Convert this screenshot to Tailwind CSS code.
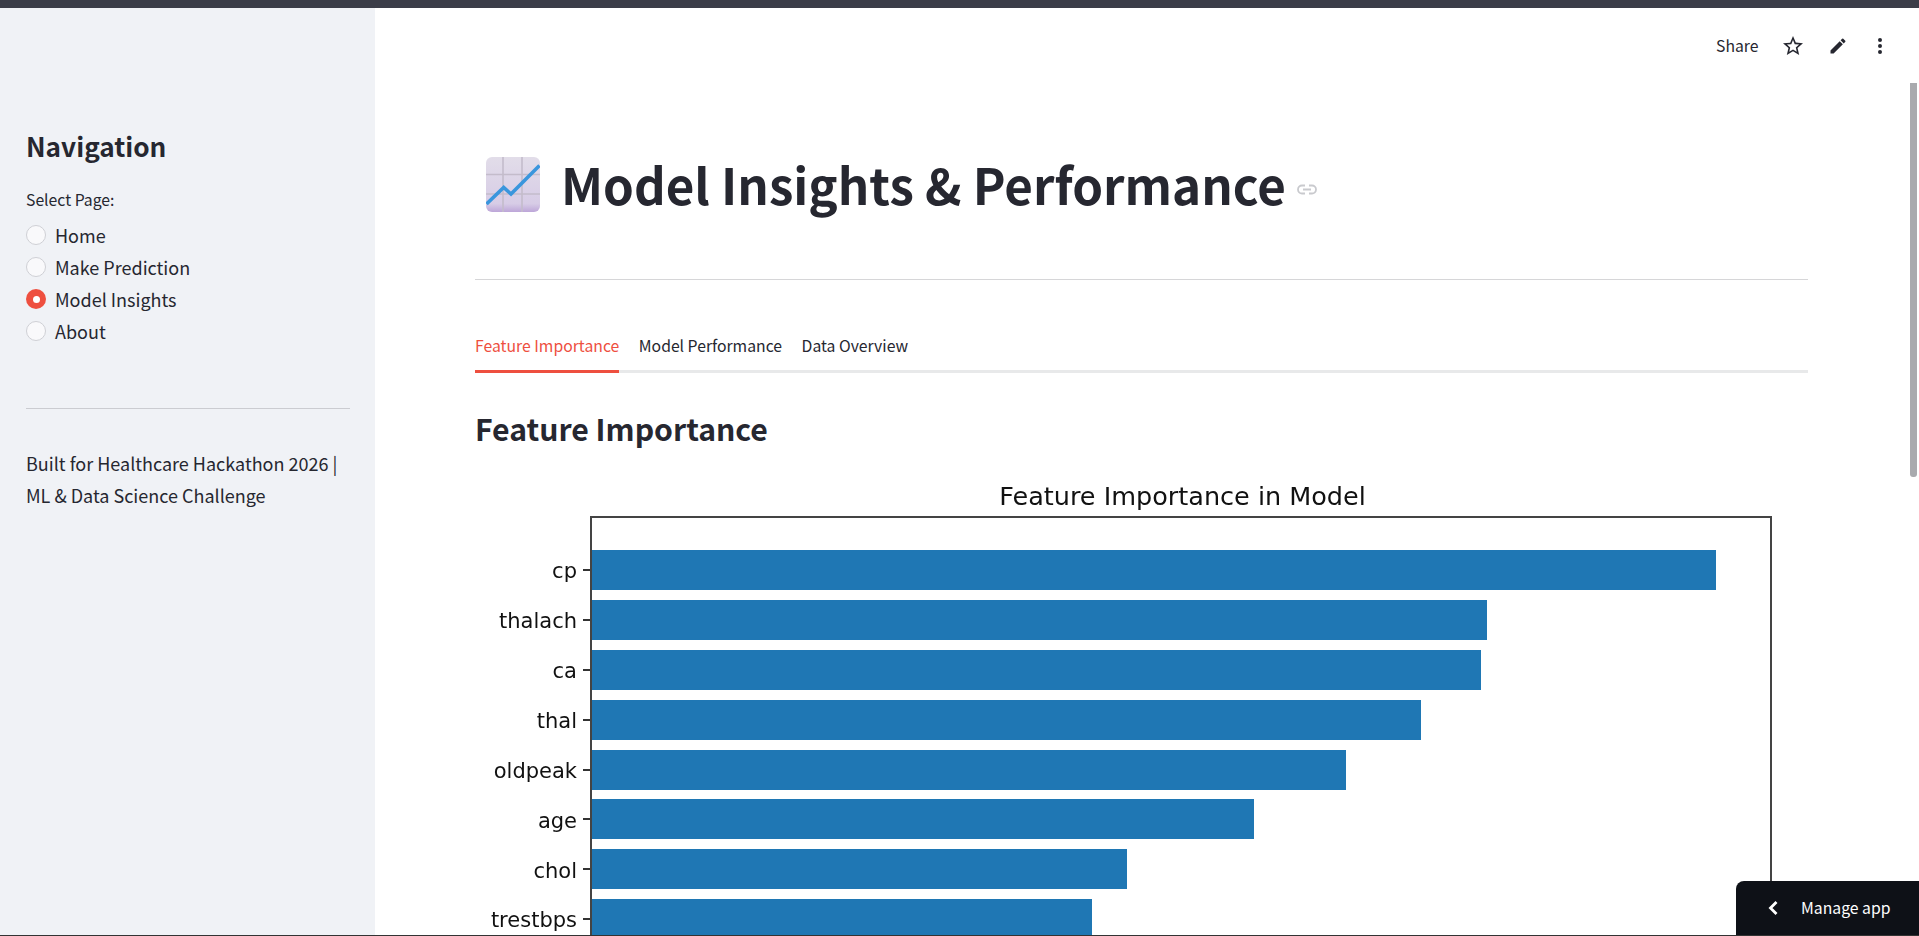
<!DOCTYPE html>
<html lang="en">
<head>
  <meta charset="UTF-8" />
  <title>Model Insights &amp; Performance</title>
  <script src="https://cdn.jsdelivr.net/npm/@tailwindcss/browser@4"></script>
</head>
<body class="bg-white text-[#262730] font-['Noto_Sans_CJK_SC','Noto_Sans',sans-serif]">
  <div class="relative h-[936px] w-full overflow-hidden flex flex-col">

    <!-- Top bar -->
    <div class="h-[8px] shrink-0 bg-[#3b3d48]"></div>

    <div class="flex flex-1 min-h-0">

      <!-- Sidebar -->
      <aside class="w-[375px] shrink-0 bg-[#f0f2f6] pl-[26px] pr-[25px]">
        <h2 class="mt-[120px] text-[26.2px] leading-[36px] font-semibold">Navigation</h2>
        <p class="mt-[26px] text-[15.75px] leading-[20px]">Select Page:</p>
        <div class="mt-[9px] flex flex-col text-[18px] leading-[32px]">
          <div class="flex items-center gap-[9px] h-[32px]">
            <span class="w-[20px] h-[20px] rounded-full bg-[#f9f9fb] border border-[#cfd0d5]"></span>Home
          </div>
          <div class="flex items-center gap-[9px] h-[32px]">
            <span class="w-[20px] h-[20px] rounded-full bg-[#f9f9fb] border border-[#cfd0d5]"></span>Make Prediction
          </div>
          <div class="flex items-center gap-[9px] h-[32px]">
            <span class="w-[20px] h-[20px] rounded-full bg-[#ee4f3f] flex items-center justify-center"><span class="w-[7px] h-[7px] rounded-full bg-white"></span></span>Model Insights
          </div>
          <div class="flex items-center gap-[9px] h-[32px]">
            <span class="w-[20px] h-[20px] rounded-full bg-[#f9f9fb] border border-[#cfd0d5]"></span>About
          </div>
        </div>
        <div class="mt-[61px] h-px bg-[#cbccd1]"></div>
        <p class="mt-[38px] text-[18px] leading-[32px]">Built for Healthcare Hackathon 2026 | ML &amp; Data Science Challenge</p>
      </aside>

      <!-- Main -->
      <main class="flex-1 min-w-0 pl-[100px] pr-[111px]">

        <!-- Title -->
        <div class="mt-[140px] h-[70px] flex items-center">
          <svg class="ml-[11px] mt-[3px] w-[54px] h-[55px] shrink-0" viewBox="0 0 54 55">
            <defs>
              <linearGradient id="emojiBg" x1="0" y1="0" x2="0" y2="1">
                <stop offset="0" stop-color="#e2dde9" />
                <stop offset="0.85" stop-color="#d7cce6" />
                <stop offset="1" stop-color="#bda6d8" />
              </linearGradient>
            </defs>
            <rect width="54" height="55" rx="6" fill="url(#emojiBg)" />
            <path d="M17 0V55M36 0V55M0 17.5H54M0 37H54" stroke="#c4bccb" stroke-width="1.6" fill="none" />
            <path d="M0.5 47L17.7 30.5L25 37L53.5 8.5" stroke="#3a96dd" stroke-width="3.6" fill="none" />
          </svg>
          <h1 class="ml-[21px] mt-[2px] text-[49.3px] leading-[70px] font-bold whitespace-nowrap">Model Insights &amp; Performance</h1>
          <svg class="ml-[10px] mt-[13px] w-[22px] h-[11px] shrink-0" viewBox="0 0 22 11" fill="none" stroke="#c9cace" stroke-width="1.8">
            <path d="M9 1.5H6a4 4 0 0 0 0 8h3M13 1.5h3a4 4 0 0 1 0 8h-3M7 5.5h8" />
          </svg>
        </div>

        <div class="mt-[61px] h-px bg-[#d6d6d8]"></div>

        <!-- Tabs -->
        <div class="mt-[49px] flex gap-[19.5px] h-[44px] border-b-[3px] border-[#e8e9ea] text-[15.75px] leading-[34px]">
          <div class="h-[44px] border-b-[3px] border-[#ee4f3f] text-[#ee4f3f]">Feature Importance</div>
          <div>Model Performance</div>
          <div>Data Overview</div>
        </div>

        <h2 class="mt-[33px] text-[30.2px] leading-[44px] font-semibold">Feature Importance</h2>

        <!-- Chart -->
        <div class="mt-[27px] flex blur-[0.4px] font-['DejaVu_Sans',sans-serif] text-[#111]">
          <div class="w-[115px] shrink-0 pt-[73px] flex flex-col gap-[9.9px] text-[21px]">
            <div class="h-[40px] flex items-center justify-end gap-[6px]"><span class="mt-[4px]">cp</span><span class="w-[7px] h-[2px] bg-[#333]"></span></div>
            <div class="h-[40px] flex items-center justify-end gap-[6px]"><span class="mt-[4px]">thalach</span><span class="w-[7px] h-[2px] bg-[#333]"></span></div>
            <div class="h-[40px] flex items-center justify-end gap-[6px]"><span class="mt-[4px]">ca</span><span class="w-[7px] h-[2px] bg-[#333]"></span></div>
            <div class="h-[40px] flex items-center justify-end gap-[6px]"><span class="mt-[4px]">thal</span><span class="w-[7px] h-[2px] bg-[#333]"></span></div>
            <div class="h-[40px] flex items-center justify-end gap-[6px]"><span class="mt-[4px]">oldpeak</span><span class="w-[7px] h-[2px] bg-[#333]"></span></div>
            <div class="h-[40px] flex items-center justify-end gap-[6px]"><span class="mt-[4px]">age</span><span class="w-[7px] h-[2px] bg-[#333]"></span></div>
            <div class="h-[40px] flex items-center justify-end gap-[6px]"><span class="mt-[4px]">chol</span><span class="w-[7px] h-[2px] bg-[#333]"></span></div>
            <div class="h-[40px] flex items-center justify-end gap-[6px]"><span class="mt-[4px]">trestbps</span><span class="w-[7px] h-[2px] bg-[#333]"></span></div>
          </div>
          <div class="w-[1182px] shrink-0">
            <div class="h-[39px] pl-[3px] text-center text-[25.5px] leading-[38px]">Feature Importance in Model</div>
            <div class="h-[600px] border-2 border-[#444] pt-[32px] flex flex-col gap-[9.9px]">
              <div class="h-[40px] w-[1124px] bg-[#1f77b4]"></div>
              <div class="h-[40px] w-[895px] bg-[#1f77b4]"></div>
              <div class="h-[40px] w-[889px] bg-[#1f77b4]"></div>
              <div class="h-[40px] w-[829px] bg-[#1f77b4]"></div>
              <div class="h-[40px] w-[754px] bg-[#1f77b4]"></div>
              <div class="h-[40px] w-[662px] bg-[#1f77b4]"></div>
              <div class="h-[40px] w-[535px] bg-[#1f77b4]"></div>
              <div class="h-[40px] w-[500px] bg-[#1f77b4]"></div>
            </div>
          </div>
        </div>
      </main>
    </div>

    <!-- Toolbar -->
    <div class="absolute top-[33px] left-[1716px] flex items-center h-[26px] text-[#262730]">
      <span class="text-[15.75px] leading-[26px]">Share</span>
      <svg class="ml-[23px] w-[24px] h-[24px]" viewBox="0 0 24 24" fill="currentColor"><path d="M22 9.24l-7.19-.62L12 2 9.19 8.63 2 9.24l5.46 4.73L5.82 21 12 17.27 18.18 21l-1.63-7.03L22 9.24zM12 15.4l-3.76 2.27 1-4.28-3.32-2.88 4.38-.38L12 6.1l1.71 4.04 4.38.38-3.32 2.88 1 4.28L12 15.4z" /></svg>
      <svg class="ml-[23px] w-[20px] h-[20px]" viewBox="0 0 24 24" fill="currentColor"><path d="M3 17.25V21h3.75L17.81 9.94l-3.75-3.75L3 17.25zM20.71 7.04a1 1 0 0 0 0-1.41l-2.34-2.34a1 1 0 0 0-1.41 0l-1.83 1.83 3.75 3.75 1.83-1.83z" /></svg>
      <svg class="ml-[20px] w-[24px] h-[24px]" viewBox="0 0 24 24" fill="currentColor"><path d="M12 8a2 2 0 1 0 0-4 2 2 0 0 0 0 4zm0 2a2 2 0 1 0 0 4 2 2 0 0 0 0-4zm0 6a2 2 0 1 0 0 4 2 2 0 0 0 0-4z" /></svg>
    </div>

    <!-- Scrollbar -->
    <div class="absolute top-[83px] left-[1910px] w-[7px] h-[394px] bg-[#a9aaae] rounded-b-[3px]"></div>

    <!-- Manage app -->
    <div class="absolute left-[1736px] right-0 top-[881px] h-[54px] bg-[#0e1117] rounded-tl-[8px] flex items-center text-white">
      <svg class="ml-[28px] w-[20px] h-[20px]" viewBox="0 0 20 20" fill="none" stroke="white" stroke-width="2.8"><path d="M12.5 4L6.5 10L12.5 16" /></svg>
      <span class="ml-[17px] text-[15.75px] leading-[54px]">Manage app</span>
    </div>

    <div class="absolute left-0 right-0 bottom-0 h-px bg-[#333]"></div>
  </div>
</body>
</html>
